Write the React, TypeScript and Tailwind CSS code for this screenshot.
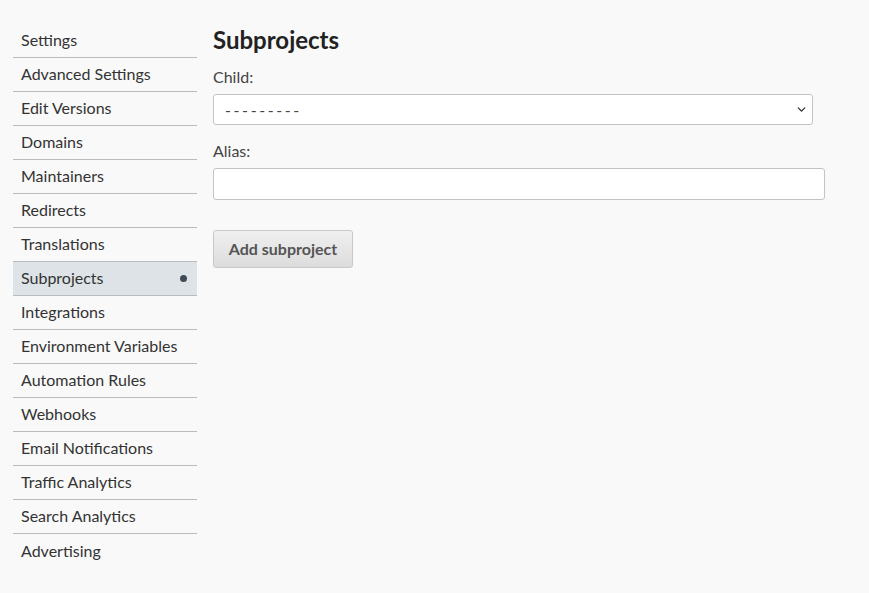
import { ChevronDown } from 'lucide-react';

const items = [
  'Settings',
  'Advanced Settings',
  'Edit Versions',
  'Domains',
  'Maintainers',
  'Redirects',
  'Translations',
  'Subprojects',
  'Integrations',
  'Environment Variables',
  'Automation Rules',
  'Webhooks',
  'Email Notifications',
  'Traffic Analytics',
  'Search Analytics',
  'Advertising',
];

export default function App() {
  return (
    <div
      className="min-h-[593px] w-full bg-[#f9f9f9] text-[#333]"
      style={{ fontFamily: 'Lato, "Noto Sans", sans-serif' }}
    >
      <div className="flex gap-4 pl-[13px] pt-[24px]">
        <ul className="w-[184px] shrink-0">
          {items.map((item, i) => {
            const active = item === 'Subprojects';
            return (
              <li
                key={item}
                className={`flex h-[34px] items-center justify-between pl-2 pr-[10px] text-[16px] ${
                  i < items.length - 1 ? 'border-b border-[#bbbbbb]' : ''
                } ${active ? 'bg-[#dde3e6]' : ''}`}
              >
                <span className="-mt-[1px]">{item}</span>
                {active && <span className="h-[7px] w-[7px] rounded-full bg-[#3f4a55]" />}
              </li>
            );
          })}
        </ul>

        <div className="flex-1 pt-[1px]">
          <h1 className="text-[24px] font-bold leading-[29px] text-[#222]">Subprojects</h1>
          <label className="mt-[14px] block text-[16px] leading-[18px] text-[#444]">Child:</label>
          <div className="relative mt-[8px] h-[31px] w-[600px] rounded-[3px] border border-[#c4c4c4] bg-white">
            <span className="absolute left-[11px] top-[3px] text-[16px] tracking-[2.6px] text-[#444]">
              ---------
            </span>
            <ChevronDown className="absolute right-[4px] top-[8px] h-[13px] w-[13px] text-[#333]" strokeWidth={2.5} />
          </div>
          <label className="mt-[17px] block text-[16px] leading-[18px] text-[#444]">Alias:</label>
          <div className="mt-[8px] h-[32px] w-[612px] rounded-[3px] border border-[#c4c4c4] bg-white" />
          <button className="mt-[30px] h-[38px] w-[140px] rounded-[3px] border border-[#c8c8c8] bg-gradient-to-b from-[#f0f0f0] to-[#dcdcdc] text-[16px] font-bold text-[#555]">
            Add subproject
          </button>
        </div>
      </div>
    </div>
  );
}
